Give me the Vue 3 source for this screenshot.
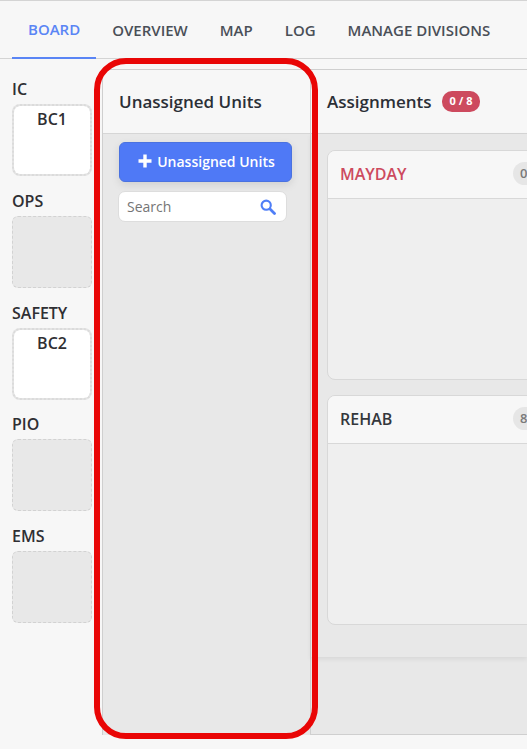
<template>
  <div class="page">
    <nav class="tabs">
      <a
        v-for="tab in tabs"
        :key="tab"
        :class="['tab', { active: tab === 'BOARD' }]"
      >{{ tab }}</a>
    </nav>

    <div class="board">
      <aside class="roles">
        <div v-for="role in roles" :key="role.name" class="role">
          <div class="role-name">{{ role.name }}</div>
          <div :class="['slot', { filled: role.unit }]">{{ role.unit }}</div>
        </div>
      </aside>

      <section class="unassigned">
        <header class="panel-head">
          <h2>Unassigned Units</h2>
        </header>
        <div class="unassigned-body">
          <button class="add-btn">
            <svg width="14" height="14" viewBox="0 0 14 14">
              <path d="M7 .5v13M.5 7h13" stroke="#fff" stroke-width="3.4" />
            </svg>
            Unassigned Units
          </button>
          <div class="search">
            <span>Search</span>
            <svg width="16" height="16" viewBox="0 0 16 16" fill="none">
              <circle cx="6.2" cy="6.2" r="4.6" stroke="#4f7ef7" stroke-width="2.1" />
              <path d="M10 10l4.5 4.5" stroke="#4f7ef7" stroke-width="2.8" stroke-linecap="round" />
            </svg>
          </div>
        </div>
      </section>

      <section class="assignments">
        <header class="panel-head">
          <h2>Assignments</h2>
          <span class="count-pill">0 / 8</span>
        </header>
        <div class="assign-body">
          <div v-for="card in cards" :key="card.name" class="card">
            <div class="card-head">
              <span :class="['card-name', { alert: card.alert }]">{{ card.name }}</span>
              <span class="card-count">{{ card.count }}</span>
            </div>
            <div class="card-body"></div>
          </div>
        </div>
      </section>

      <div class="highlight"></div>
    </div>
  </div>
</template>

<script setup>
const tabs = ['BOARD', 'OVERVIEW', 'MAP', 'LOG', 'MANAGE DIVISIONS']

const roles = [
  { name: 'IC', unit: 'BC1' },
  { name: 'OPS', unit: '' },
  { name: 'SAFETY', unit: 'BC2' },
  { name: 'PIO', unit: '' },
  { name: 'EMS', unit: '' }
]

const cards = [
  { name: 'MAYDAY', count: 0, alert: true },
  { name: 'REHAB', count: 8, alert: false }
]
</script>

<style>
html, body {
  margin: 0;
  overflow: hidden;
}
</style>

<style scoped>
.page {
  width: 527px;
  height: 749px;
  overflow: hidden;
  background: #f7f7f7;
  font-family: "Open Sans", "Liberation Sans", sans-serif;
  color: #2f2f33;
  border-top: 1px solid #d4d4d4;
  box-sizing: border-box;
}

.tabs {
  display: flex;
  height: 58px;
  padding-left: 12px;
  box-sizing: border-box;
  border-bottom: 1px solid #d4d4d4;
}

.tab {
  display: flex;
  align-items: center;
  padding: 0 16px;
  height: 58px;
  box-sizing: border-box;
  font-size: 15px;
  font-weight: 600;
  color: #4a4f57;
  white-space: nowrap;
}

.tab.active {
  color: #5a85f5;
  border-bottom: 2px solid #5a85f5;
}

.board {
  position: relative;
  display: flex;
  height: 666px;
  margin-top: 10px;
}

.roles {
  width: 102px;
  flex-shrink: 0;
  padding: 10px 0 0 12px;
  box-sizing: border-box;
}

.role {
  margin-bottom: 14.75px;
}

.role-name {
  height: 25px;
  font-size: 16px;
  font-weight: 600;
  line-height: 20px;
}

.slot {
  width: 80px;
  height: 72px;
  box-sizing: border-box;
  border: 1px dashed #d2d2d2;
  border-radius: 6px;
  background: #e8e8e8;
}

/* grey under the dotted border keeps the gaps from reading as white */
.slot.filled {
  background: linear-gradient(#fff, #fff) padding-box, linear-gradient(#e4e4e4, #e4e4e4) border-box;
  border: 2px dotted #dbdbdb;
  border-radius: 8px;
  text-align: center;
  font-size: 16px;
  font-weight: 600;
  line-height: 26px;
}

.unassigned {
  width: 209px;
  flex-shrink: 0;
  display: flex;
  flex-direction: column;
  box-sizing: border-box;
  border: 1px solid #cfcfcf;
  border-bottom: none;
  border-radius: 6px 0 0 0;
  background: #e8e8e8;
}

.panel-head {
  display: flex;
  align-items: center;
  gap: 10px;
  height: 64px;
  flex-shrink: 0;
  box-sizing: border-box;
  padding-left: 16px;
  background: #f7f7f7;
  border-bottom: 1px solid #d6d6d6;
}

.panel-head h2 {
  margin: 0;
  font-size: 17px;
  font-weight: 600;
  color: #2b2f36;
}

.unassigned-body {
  padding: 8px 16px;
}

.add-btn {
  display: flex;
  align-items: center;
  justify-content: center;
  gap: 5px;
  width: 173px;
  height: 40px;
  padding: 0 0 2px 2px;
  border: 1px solid #4a72e0;
  border-radius: 6px;
  background: #4f79f6;
  color: #fff;
  font-family: inherit;
  font-size: 14px;
  font-weight: 600;
  box-shadow: 0 3px 8px rgba(0, 0, 0, 0.1);
}

.search {
  display: flex;
  align-items: center;
  justify-content: space-between;
  width: 169px;
  height: 31px;
  margin: 9px 0 0 -1px;
  padding: 0 10px 0 8px;
  box-sizing: border-box;
  border: 1px solid #ddd;
  border-radius: 7px;
  background: #fff;
  font-size: 14px;
  color: #757575;
}

.assignments {
  flex: 1;
  min-width: 0;
  display: flex;
  flex-direction: column;
  background: #e8e8e8;
  border-top: 1px solid #cfcfcf;
  border-bottom: 1px solid #cfcfcf;
}

.count-pill {
  padding: 0 8px;
  height: 21px;
  line-height: 20px;
  border-radius: 10px;
  background: #cd4a5e;
  color: #fff;
  font-size: 11px;
  font-weight: 700;
}

.assign-body {
  display: flex;
  flex-direction: column;
  gap: 15px;
  height: 523px;
  box-sizing: border-box;
  padding: 16px 0 0 16px;
  box-shadow: 0 2px 5px rgba(0, 0, 0, 0.08);
}

.card {
  width: 260px;
  height: 230px;
  box-sizing: border-box;
  display: flex;
  flex-direction: column;
  border: 1px solid #d8d8d8;
  border-radius: 8px;
  background: #efefef;
  overflow: hidden;
}

.card-head {
  display: flex;
  align-items: center;
  justify-content: space-between;
  height: 48px;
  flex-shrink: 0;
  box-sizing: border-box;
  padding: 0 0 2px 12px;
  background: #f7f7f7;
  border-bottom: 1px solid #d8d8d8;
}

.card-name {
  font-size: 16px;
  font-weight: 600;
  color: #34373c;
}

.card-name.alert {
  color: #cd4a5e;
}

/* the pill starts 186px into the card, so the count still shows before the edge */
.card-count {
  width: 73px;
  height: 23px;
  flex-shrink: 0;
  padding-left: 7px;
  box-sizing: border-box;
  border-radius: 12px;
  background: #e6e6e6;
  color: #7a7a7a;
  font-size: 13px;
  font-weight: 600;
  line-height: 23px;
}

.highlight {
  position: absolute;
  left: 94px;
  top: -11px;
  width: 224px;
  height: 681px;
  box-sizing: border-box;
  border: 6px solid #e90606;
  border-radius: 32px;
  pointer-events: none;
}
</style>
